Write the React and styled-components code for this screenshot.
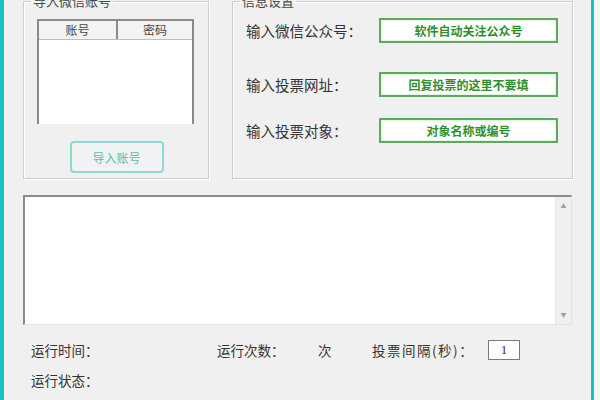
import React from 'react';
import styled, { createGlobalStyle } from 'styled-components';

const GlobalStyle = createGlobalStyle`
  html, body {
    margin: 0;
    padding: 0;
    background: #f0f0f0;
  }
  body {
    font-family: "Noto Sans CJK SC", "Liberation Sans", sans-serif;
    color: #333;
  }
`;

const settings = [
  { label: '输入微信公众号：', hint: '软件自动关注公众号', top: 10 },
  { label: '输入投票网址：', hint: '回复投票的这里不要填', top: 29 },
  { label: '输入投票对象：', hint: '对象名称或编号', top: 21 },
];

const App = () => {
  return (
    <>
      <GlobalStyle />
      <Window>
        <Frame>
          <TopRow>
            <GroupBox $width={186}>
              <Legend>导入微信账号</Legend>
              <Table>
                <HeadRow>
                  <HeadCell>账号</HeadCell>
                  <HeadCell>密码</HeadCell>
                </HeadRow>
                <TableBody />
              </Table>
              <ImportButton>导入账号</ImportButton>
            </GroupBox>
            <GroupBox $width={341}>
              <Legend>信息设置</Legend>
              {settings.map(({ label, hint, top }) => (
                <SettingRow key={label} $top={top}>
                  <Label>{label}</Label>
                  <HintBox>{hint}</HintBox>
                </SettingRow>
              ))}
            </GroupBox>
          </TopRow>

          <LogBox>
            <LogText />
            <ScrollBar>
              <Arrow>▲</Arrow>
              <Arrow>▼</Arrow>
            </ScrollBar>
          </LogBox>

          <StatusLine $top={10}>
            <StatusText $width={186}>运行时间：</StatusText>
            <StatusText $width={101}>运行次数：</StatusText>
            <StatusText $width={54}>次</StatusText>
            <StatusText $width={116} $spacing={1.5}>投票间隔(秒)：</StatusText>
            <IntervalBox>1</IntervalBox>
          </StatusLine>
          <StatusLine>
            <StatusText>运行状态：</StatusText>
          </StatusLine>
        </Frame>
      </Window>
    </>
  );
};

const Window = styled.div`
  width: 600px;
  height: 400px;
  overflow: hidden;
  box-sizing: border-box;
  border-left: 4px solid #16c0c4;
  border-right: 6px solid #f6f6f6;
  background: #f0f0f0;
  display: flex;
`;

const Frame = styled.div`
  flex: 1;
  border-right: 4px solid #16c0c4;
  padding: 0 18px 0 19px;
  display: flex;
  flex-direction: column;
`;

const TopRow = styled.div`
  display: flex;
  gap: 23px;
  margin-top: -6px;
  height: 185px;
`;

const GroupBox = styled.fieldset`
  width: ${({ $width }) => $width}px;
  box-sizing: border-box;
  margin: 0;
  padding: 0 14px 0 13px;
  border: 1px solid #cdcdcd;
  box-shadow: inset 1px 1px 0 #fff, 1px 1px 0 #fff;
  display: flex;
  flex-direction: column;
`;

const Legend = styled.legend`
  font-size: 13px;
  line-height: 14px;
  padding: 0 2px;
  margin-left: -6px;
  color: #444;
`;

const Table = styled.div`
  margin-top: 11px;
  height: 103px;
  border-top: 2px solid #8a8a8a;
  border-left: 2px solid #8a8a8a;
  border-right: 2px solid #8a8a8a;
  background: #fff;
  display: flex;
  flex-direction: column;
`;

const HeadRow = styled.div`
  display: grid;
  grid-template-columns: 77px 1fr;
  height: 18px;
  background: #f3f3f3;
  border-bottom: 1px solid #bdbdbd;
`;

const HeadCell = styled.div`
  font-size: 12px;
  line-height: 18px;
  text-align: center;
  color: #444;
  & + & {
    border-left: 2px solid #8a8a8a;
  }
`;

const TableBody = styled.div`
  flex: 1;
  background: #fff;
`;

const ImportButton = styled.button`
  align-self: center;
  margin-top: 17px;
  margin-left: 2px;
  width: 94px;
  height: 32px;
  border: 2px solid #8ddad2;
  border-radius: 4px;
  background: #f2f2f2;
  color: #4fc2b8;
  font-family: inherit;
  font-size: 12px;
  cursor: pointer;
`;

const SettingRow = styled.div`
  display: flex;
  align-items: center;
  margin-top: ${({ $top }) => $top}px;
`;

const Label = styled.span`
  width: 133px;
  font-size: 14.5px;
  color: #333;
  white-space: nowrap;
`;

const HintBox = styled.div`
  width: 179px;
  height: 25px;
  box-sizing: border-box;
  border: 2px solid #5ea95e;
  box-shadow: inset 0 0 0 1px #e3f6e3;
  background: #fff;
  color: #2f8f2f;
  font-weight: bold;
  font-size: 12px;
  line-height: 21px;
  text-align: center;
`;

const LogBox = styled.div`
  margin-top: 16px;
  width: 549px;
  height: 130px;
  box-sizing: border-box;
  border-top: 2px solid #8c8c8c;
  border-left: 2px solid #8c8c8c;
  border-right: 1px solid #e4e4e4;
  border-bottom: 1px solid #e4e4e4;
  background: #fff;
  display: flex;
`;

const LogText = styled.div`
  flex: 1;
`;

const ScrollBar = styled.div`
  width: 15px;
  background: #f0f0f0;
  border-left: 1px solid #e8e8e8;
  display: flex;
  flex-direction: column;
  justify-content: space-between;
  align-items: center;
  padding: 5px 0;
`;

const Arrow = styled.span`
  font-size: 6px;
  color: #a0a0a0;
  line-height: 8px;
`;

const StatusLine = styled.div`
  display: flex;
  align-items: center;
  height: 30px;
  padding-left: 8px;
  margin-top: ${({ $top }) => $top || 0}px;
`;

const StatusText = styled.span`
  width: ${({ $width }) => ($width ? `${$width}px` : 'auto')};
  font-size: 13.5px;
  letter-spacing: ${({ $spacing }) => $spacing || 0}px;
  color: #333;
  white-space: nowrap;
`;

const IntervalBox = styled.div`
  width: 32px;
  height: 20px;
  box-sizing: border-box;
  border: 1px solid #7a7a7a;
  background: #fff;
  font-family: "Liberation Serif", serif;
  font-size: 12px;
  line-height: 18px;
  text-align: center;
  color: #222;
`;

export default App;
